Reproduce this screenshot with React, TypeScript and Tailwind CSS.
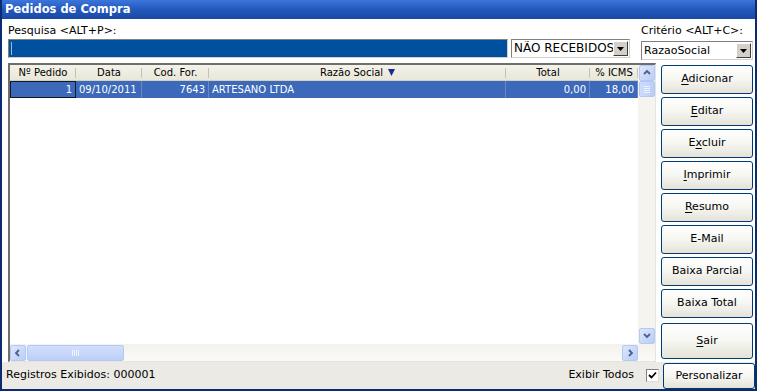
import React from 'react';

const ui = "font-['DejaVu_Sans',sans-serif]";

const cols = [
  { title: 'Nº Pedido', w: 'w-[66px]', value: '1', align: 'justify-end' },
  { title: 'Data', w: 'w-[66px]', value: '09/10/2011', align: 'justify-start' },
  { title: 'Cod. For.', w: 'w-[67px]', value: '7643', align: 'justify-end' },
  { title: 'Razão Social', w: 'w-[297px]', value: 'ARTESANO LTDA', align: 'justify-start', sort: true },
  { title: 'Total', w: 'w-[84px]', value: '0,00', align: 'justify-end' },
  { title: '% ICMS', w: 'w-[48px]', value: '18,00', align: 'justify-end' },
];

const buttons = [
  { label: 'Adicionar', u: 0 },
  { label: 'Editar', u: 0 },
  { label: 'Excluir', u: 1 },
  { label: 'Imprimir', u: 0 },
  { label: 'Resumo', u: 0 },
  { label: 'E-Mail', u: -1 },
  { label: 'Baixa Parcial', u: -1 },
  { label: 'Baixa Total', u: -1 },
];

const Label = ({ label, u }: { label: string; u: number }) =>
  u < 0 ? (
    <>{label}</>
  ) : (
    <>
      {label.slice(0, u)}
      <span className="underline underline-offset-2">{label[u]}</span>
      {label.slice(u + 1)}
    </>
  );

const XpButton = ({ label, u, tall }: { label: string; u: number; tall?: boolean }) => (
  <button
    className={`${tall ? 'h-[36px] mt-[2px]' : 'h-[29px]'} w-full rounded-[3px] border border-[#003c74] bg-gradient-to-b from-white via-[#f6f6f2] to-[#e4e2d8] text-[11px] text-black ${ui}`}
  >
    <Label label={label} u={u} />
  </button>
);

const ComboArrow = () => (
  <div className="flex h-[15px] w-[15px] items-center justify-center border border-t-white border-l-white border-r-[#404040] border-b-[#404040] bg-[#d4d0c8]">
    <svg width="7" height="4" viewBox="0 0 7 4">
      <path d="M0 0h7L3.5 4z" fill="#000" />
    </svg>
  </div>
);

const ScrollBtn = ({ dir }: { dir: 'up' | 'down' | 'left' | 'right' }) => {
  const d = {
    up: 'M2 6l3-3 3 3',
    down: 'M2 3l3 3 3-3',
    left: 'M6 2L3 5l3 3',
    right: 'M4 2l3 3-3 3',
  }[dir];
  return (
    <div className="flex h-[16px] w-[16px] items-center justify-center rounded-[2px] border border-[#b4c8f6] bg-gradient-to-br from-[#dde7fe] to-[#b9cdf7]">
      <svg width="10" height="10" viewBox="0 0 10 10">
        <path d={d} fill="none" stroke="#4d6185" strokeWidth="1.8" />
      </svg>
    </div>
  );
};

export default function App() {
  return (
    <div className={`flex h-[391px] w-[757px] flex-col overflow-hidden border-x-2 border-b-2 border-[#0b2a6f] bg-white ${ui}`}>
      {/* title */}
      <div className="flex h-[19px] shrink-0 items-center bg-gradient-to-b from-[#3c76dc] via-[#2358bb] to-[#1a4aa6] pl-[3px]">
        <span className="text-[11.5px] font-bold text-white">Pedidos de Compra</span>
      </div>

      {/* search row */}
      <div className="flex h-[44px] shrink-0 px-[6px] pt-[4px]">
        <div className="flex w-[622px] flex-col">
          <div className="h-[15px] text-[11px] leading-[15px] text-black">Pesquisa &lt;ALT+P&gt;:</div>
          <div className="mt-[1px] flex items-start">
            <div className="h-[19px] w-[500px] border border-t-[#808080] border-l-[#808080] border-r-[#d4d0c8] border-b-[#d4d0c8] bg-[#0050a0] pl-[2px] pt-[2px]">
              <div className="h-[13px] w-[1px] bg-[#9bb7e0]" />
            </div>
            <div className="ml-[3px] flex h-[19px] w-[119px] items-center border border-t-[#808080] border-l-[#808080] border-r-[#d4d0c8] border-b-[#d4d0c8] bg-white pr-[1px]">
              <div className="flex-1 overflow-hidden whitespace-nowrap pl-[2px] text-[12px] leading-[15px] text-black">NÃO RECEBIDOS</div>
              <ComboArrow />
            </div>
          </div>
        </div>
        <div className="ml-[11px] flex w-[112px] flex-col">
          <div className="h-[15px] text-[11px] leading-[15px] text-black">Critério &lt;ALT+C&gt;:</div>
          <div className="mt-[3px] flex h-[19px] w-[112px] items-center border border-t-[#808080] border-l-[#808080] border-r-[#d4d0c8] border-b-[#d4d0c8] bg-white pr-[1px]">
            <div className="flex-1 pl-[2px] text-[11px] leading-[15px] text-black">RazaoSocial</div>
            <ComboArrow />
          </div>
        </div>
      </div>

      {/* main */}
      <div className="flex h-[299px] shrink-0 pl-[6px]">
        <div className="flex h-[299px] w-[648px] flex-col border-t-2 border-l-2 border-b border-r border-t-[#6e6e6e] border-l-[#6e6e6e] border-b-[#e6e4dc] border-r-[#e6e4dc]">
          <div className="flex h-[279px]">
            <div className="flex w-[628px] flex-col text-[10px]">
              <div className="flex h-[16px] border-b border-[#d3d0bf] bg-gradient-to-b from-[#f4f3ea] to-[#e9e7d8]">
                {cols.map((c, i) => (
                  <div key={i} className={`${c.w} relative flex items-center justify-center text-black`}>
                    <span>{c.title}</span>
                    {c.sort && (
                      <svg className="ml-[5px]" width="7" height="7" viewBox="0 0 7 7">
                        <path d="M0 0h7L3.5 7z" fill="#1d2a8f" />
                      </svg>
                    )}
                    <div className="absolute right-0 top-[3px] h-[10px] w-[1px] bg-[#c5c2b0]" />
                  </div>
                ))}
              </div>
              <div className="flex h-[17px] bg-[#3d69ba] text-white">
                {cols.map((c, i) => (
                  <div
                    key={i}
                    className={`${c.w} flex items-center ${c.align} px-[3px] ${i === 0 ? 'border border-[#101828]' : 'border-r border-[#6d87bf]'}`}
                  >
                    {c.value}
                  </div>
                ))}
              </div>
            </div>
            <div className="flex w-[17px] flex-col items-center bg-[#f5f4ef] pt-[0px]">
              <ScrollBtn dir="up" />
              <div className="mt-[0px] flex h-[16px] w-[16px] flex-col items-center justify-center gap-[1px] rounded-[2px] border border-[#b4c8f6] bg-gradient-to-r from-[#cfdcfd] to-[#bacdf7]">
                <div className="h-[1px] w-[6px] bg-[#eef3fe]" />
                <div className="h-[1px] w-[6px] bg-[#eef3fe]" />
                <div className="h-[1px] w-[6px] bg-[#eef3fe]" />
                <div className="h-[1px] w-[6px] bg-[#eef3fe]" />
              </div>
              <div className="flex-1" />
              <ScrollBtn dir="down" />
            </div>
          </div>
          <div className="flex h-[17px] items-center bg-gradient-to-b from-[#f3f2ec] to-[#fbfaf8]">
            <ScrollBtn dir="left" />
            <div className="ml-[1px] flex h-[16px] w-[97px] items-center justify-center gap-[1px] rounded-[2px] border border-[#b4c8f6] bg-gradient-to-b from-[#d3defd] to-[#bccff8]">
              <div className="h-[6px] w-[1px] bg-[#eef3fe]" />
              <div className="h-[6px] w-[1px] bg-[#eef3fe]" />
              <div className="h-[6px] w-[1px] bg-[#eef3fe]" />
              <div className="h-[6px] w-[1px] bg-[#eef3fe]" />
            </div>
            <div className="flex-1" />
            <ScrollBtn dir="right" />
            <div className="w-[17px]" />
          </div>
        </div>
        <div className="ml-[5px] flex w-[92px] flex-col gap-[3px] pt-[2px]">
          {buttons.map((b) => (
            <XpButton key={b.label} label={b.label} u={b.u} />
          ))}
          <XpButton label="Sair" u={0} tall />
        </div>
      </div>

      {/* status */}
      <div className="flex flex-1 items-center bg-[#ebeae5] pl-[4px]">
        <span className="text-[11px] text-black">Registros Exibidos: 000001</span>
        <div className="flex-1" />
        <span className="text-[11px] text-black">Exibir Todos</span>
        <div className="ml-[12px] flex h-[13px] w-[13px] items-center justify-center border border-t-[#808080] border-l-[#808080] border-r-[#e0ded4] border-b-[#e0ded4] bg-white">
          <svg width="9" height="9" viewBox="0 0 9 9">
            <path d="M1 4l2.5 2.5L8 1.5" fill="none" stroke="#000" strokeWidth="1.8" />
          </svg>
        </div>
        <div className="ml-[4px] w-[92px] self-start">
          <button className={`h-[26px] w-full rounded-[3px] border border-[#003c74] bg-gradient-to-b from-white via-[#f6f6f2] to-[#e4e2d8] text-[11px] text-black ${ui}`}>
            Personalizar
          </button>
        </div>
      </div>
    </div>
  );
}
